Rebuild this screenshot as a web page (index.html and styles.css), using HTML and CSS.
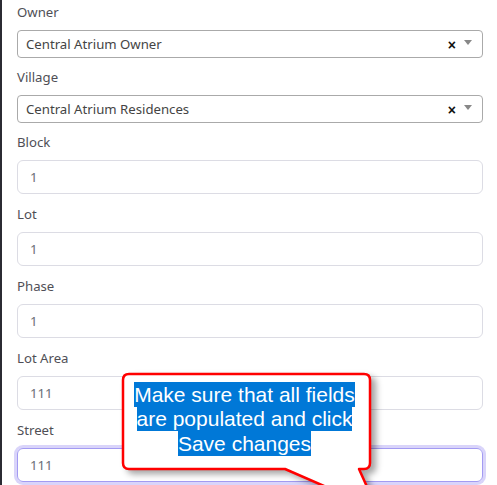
FILE: index.html
```html
<!DOCTYPE html>
<html>
<head>
<meta charset="utf-8">
<link rel="stylesheet" href="styles.css">
</head>
<body>
<div class="page">
  <form class="form">
    <div class="field field-select">
      <label class="label">Owner</label>
      <div class="select">
        <span class="select-text">Central Atrium Owner</span>
        <span class="select-clear">×</span>
        <span class="select-arrow"></span>
      </div>
    </div>
    <div class="field field-select">
      <label class="label">Village</label>
      <div class="select">
        <span class="select-text">Central Atrium Residences</span>
        <span class="select-clear">×</span>
        <span class="select-arrow"></span>
      </div>
    </div>
    <div class="field">
      <label class="label">Block</label>
      <div class="input">1</div>
    </div>
    <div class="field">
      <label class="label">Lot</label>
      <div class="input">1</div>
    </div>
    <div class="field">
      <label class="label">Phase</label>
      <div class="input">1</div>
    </div>
    <div class="field">
      <label class="label">Lot Area</label>
      <div class="input">111</div>
    </div>
    <div class="field">
      <label class="label">Street</label>
      <div class="input input-focus">111</div>
    </div>
  </form>

  <svg class="callout-shape" width="497" height="485" viewBox="0 0 497 485">
    <path d="M127 374 H362 Q368 374 368 380 V463 Q368 469 362 469 H357 L375 509 L283 469 H127 Q121 469 121 463 V380 Q121 374 127 374 Z" fill="#ffffff" stroke="#ff0000" stroke-width="2.5" stroke-linejoin="round"/>
  </svg>
  <div class="callout-text">
    <span class="hl">Make sure that all fields</span><br>
    <span class="hl">are populated and click</span><br>
    <span class="hl">Save changes</span>
  </div>
</div>
</body>
</html>
```

FILE: styles.css
```css
html, body {
  margin: 0;
  padding: 0;
  height: 485px;
  overflow: hidden;
  background: #ffffff;
}

.page {
  position: relative;
  height: 485px;
  box-sizing: border-box;
  border-left: 2px solid #2b2b33;
  padding: 2px 14px 0 15px;
  font-family: "Noto Sans", "Open Sans", sans-serif;
  font-size: 13.2px;
}

.form {
  margin: 0;
  display: flex;
  flex-direction: column;
}

.field {
  display: flex;
  flex-direction: column;
  margin-bottom: 10px;
}

.field-select {
  margin-bottom: 9px;
}

.label {
  line-height: 20px;
  margin-bottom: 8px;
  color: #4f4f56;
}

.select {
  height: 28px;
  box-sizing: border-box;
  border: 1px solid #aaaaaa;
  border-radius: 4px;
  display: flex;
  align-items: center;
  padding: 0 8px 0 8px;
  color: #444444;
}

.select-text {
  flex: 1;
}

.select-clear {
  font-family: "Liberation Sans", Arial, sans-serif;
  font-weight: bold;
  font-size: 14px;
  color: #111111;
  margin-right: 8px;
  margin-top: 1px;
}

.select-arrow {
  width: 0;
  height: 0;
  border-style: solid;
  border-width: 5px 4px 0 4px;
  border-color: #888888 transparent transparent transparent;
  margin-right: 2px;
  margin-top: -3px;
}

.input {
  height: 34px;
  box-sizing: border-box;
  border: 1px solid #dcdce4;
  border-radius: 6px;
  padding: 0 12px;
  display: flex;
  align-items: center;
  color: #6c6f78;
}

.input-focus {
  border-color: #a39bf2;
  box-shadow: 0 0 0 3px rgba(170, 160, 245, 0.45);
}

.callout-shape {
  position: absolute;
  left: 0;
  top: 0;
  overflow: visible;
  pointer-events: none;
  filter: drop-shadow(5px 4px 3px rgba(0, 0, 0, 0.35));
}

.callout-text {
  position: absolute;
  left: 121px;
  top: 374px;
  width: 243px;
  padding-top: 9px;
  text-align: center;
  font-family: "Liberation Sans", Arial, sans-serif;
  font-size: 21px;
  line-height: 24.3px;
  color: #ffffff;
}

.hl {
  background: #0078d7;
  padding: 1px 0;
}
```
